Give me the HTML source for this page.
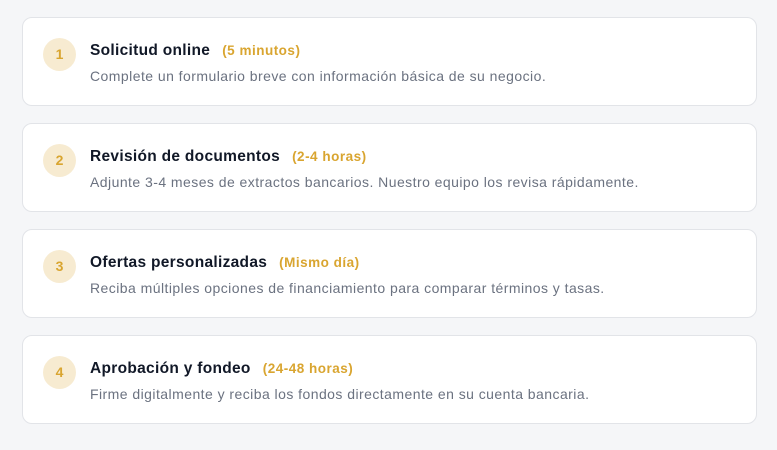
<!DOCTYPE html>
<html><head><style>
body{margin:0;background:#f5f6f8;width:777px;height:450px;font-family:"Liberation Sans",sans-serif;overflow:hidden}
.card{position:absolute;left:22px;width:733px;height:87px;background:#fff;border:1px solid #e2e4e8;border-radius:10px}
.num{position:absolute;left:20px;top:20px;width:33px;height:33px;border-radius:50%;background:#f7ebd1;color:#d9a530;font-weight:bold;font-size:14px;text-align:center;line-height:33px}
.t{position:absolute;left:67px;top:24px;font-size:15.5px;font-weight:bold;color:#111827;white-space:nowrap;letter-spacing:0.3px}
.t span{color:#d9a530;font-size:13.5px;margin-left:12px;letter-spacing:0.5px}
.d{position:absolute;left:67px;top:50px;font-size:14px;color:#6b7280;white-space:nowrap;letter-spacing:0.45px}
</style></head><body>
<div class="card" style="top:17px"><div class="num">1</div><div class="t">Solicitud online<span>(5 minutos)</span></div><div class="d">Complete un formulario breve con información básica de su negocio.</div></div>
<div class="card" style="top:123px"><div class="num">2</div><div class="t">Revisión de documentos<span>(2-4 horas)</span></div><div class="d">Adjunte 3-4 meses de extractos bancarios. Nuestro equipo los revisa rápidamente.</div></div>
<div class="card" style="top:229px"><div class="num">3</div><div class="t">Ofertas personalizadas<span>(Mismo día)</span></div><div class="d">Reciba múltiples opciones de financiamiento para comparar términos y tasas.</div></div>
<div class="card" style="top:335px"><div class="num">4</div><div class="t">Aprobación y fondeo<span>(24-48 horas)</span></div><div class="d">Firme digitalmente y reciba los fondos directamente en su cuenta bancaria.</div></div>
</body></html>
